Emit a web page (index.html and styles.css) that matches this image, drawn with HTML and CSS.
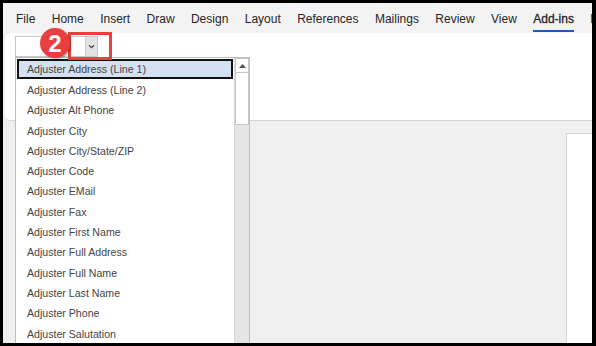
FILE: index.html
```html
<!DOCTYPE html>
<html lang="en">
<head>
  <meta charset="UTF-8" />
  <title>Add-ins</title>
  <link rel="stylesheet" href="styles.css">
</head>
<body>
  <div class="frame">
    <div class="tabs">
      <span class="tab">File</span>
      <span class="tab">Home</span>
      <span class="tab">Insert</span>
      <span class="tab">Draw</span>
      <span class="tab">Design</span>
      <span class="tab">Layout</span>
      <span class="tab">References</span>
      <span class="tab">Mailings</span>
      <span class="tab">Review</span>
      <span class="tab">View</span>
      <span class="tab active">Add-ins</span>
      <span class="tab">Help</span>
    </div>

    <div class="ribbon">
      <div class="combo">
        <div class="combo-input"></div>
        <div class="combo-btn">
          <svg width="7" height="5" viewBox="0 0 7 5"><path d="M1 1.2 L3.5 3.6 L6 1.2" fill="none" stroke="#444" stroke-width="1.2"/></svg>
        </div>
      </div>
    </div>

    <div class="docarea">
      <div class="page"></div>
    </div>

    <div class="dropdown">
      <ul class="items">
        <li class="selected">Adjuster Address (Line 1)</li>
        <li>Adjuster Address (Line 2)</li>
        <li>Adjuster Alt Phone</li>
        <li>Adjuster City</li>
        <li>Adjuster City/State/ZIP</li>
        <li>Adjuster Code</li>
        <li>Adjuster EMail</li>
        <li>Adjuster Fax</li>
        <li>Adjuster First Name</li>
        <li>Adjuster Full Address</li>
        <li>Adjuster Full Name</li>
        <li>Adjuster Last Name</li>
        <li>Adjuster Phone</li>
        <li>Adjuster Salutation</li>
      </ul>
      <div class="scrollbar">
        <div class="arrow">
          <svg width="7" height="4" viewBox="0 0 7 4"><path d="M0 4 L3.5 0 L7 4 Z" fill="#555"/></svg>
        </div>
        <div class="thumb"></div>
      </div>
    </div>

    <div class="callout"></div>
    <div class="badge">2</div>
  </div>
</body>
</html>
```

FILE: styles.css
```css
html, body {
  margin: 0;
  background-color: #000;
}
body {
  font-family: "Liberation Sans", Arial, sans-serif;
  width: 596px;
  height: 346px;
  overflow: hidden;
}
.frame {
  position: relative;
  margin: 3px 4px 0 3px;
  height: 340px;
  background-color: #f0f0f0;
  overflow: hidden;
}
.tabs {
  display: flex;
  gap: 16.4px;
  height: 30px;
  align-items: center;
  padding-left: 13px;
  background-color: #f3f3f3;
  font-size: 12px;
  color: #262626;
  white-space: nowrap;
  overflow: hidden;
}
.tab {
  position: relative;
  padding-top: 2px;
}
.tab.active {
  color: #1f1f1f;
  -webkit-text-stroke: 0.3px #1f1f1f;
}
.tab.active::after {
  content: "";
  position: absolute;
  left: 0;
  right: 0;
  bottom: -6px;
  height: 2px;
  background-color: #185abd;
}
.ribbon {
  height: 88px;
  margin-left: 2px;
  background-color: #fff;
  border-radius: 5px 0 0 5px;
  border-bottom: 1px solid #d6d6d6;
  padding: 3px 0 0 10px;
  box-sizing: border-box;
}
.combo {
  display: flex;
  width: 83px;
  height: 21px;
  border: 1px solid #c8c8c8;
  box-sizing: border-box;
}
.combo-input {
  flex: 1;
  background-color: #fff;
}
.combo-btn {
  width: 11px;
  background-color: #e3e3e3;
  border-left: 1px solid #c8c8c8;
  display: flex;
  align-items: center;
  justify-content: center;
}
.docarea {
  height: 221px;
  padding: 12px 0 0 563px;
  box-sizing: border-box;
}
.page {
  height: 100%;
  background-color: #fff;
  border-left: 1px solid #d4d4d4;
  border-top: 1px solid #d4d4d4;
}
.dropdown {
  position: absolute;
  left: 12px;
  top: 54px;
  width: 233px;
  height: 300px;
  background-color: #fff;
  border: 1px solid #bdbdbd;
  display: flex;
}
.items {
  list-style: none;
  margin: 0;
  padding: 1px 0 0 1px;
  width: 216px;
  font-size: 10.6px;
  color: #444;
}
.items li {
  height: 20.3px;
  line-height: 20.3px;
  padding-left: 10px;
  white-space: nowrap;
}
.items li.selected {
  background-color: #d5e0f1;
  border: 2px solid #111;
  height: 16px;
  line-height: 16px;
  padding-left: 8px;
  margin-bottom: 1px;
}
.scrollbar {
  width: 14px;
  margin-left: 1px;
  background-color: #e5e5e5;
  border-left: 1px solid #d9d9d9;
  display: flex;
  flex-direction: column;
}
.arrow {
  height: 13px;
  background-color: #fff;
  border: 1px solid #c7c7c7;
  display: flex;
  align-items: center;
  justify-content: center;
}
.thumb {
  height: 51px;
  background-color: #fff;
  border: 1px solid #c7c7c7;
  border-top: none;
}
.callout {
  position: absolute;
  left: 65px;
  top: 29px;
  width: 38px;
  height: 22px;
  border: 3px solid #e8403e;
}
.badge {
  position: absolute;
  left: 37px;
  top: 25px;
  width: 30px;
  height: 30px;
  border-radius: 50%;
  background-color: #e8403e;
  color: #fff;
  font-size: 24px;
  font-weight: bold;
  line-height: 31px;
  text-align: center;
  box-shadow: 1px 1px 2px rgba(0, 0, 0, 0.35);
}
```
